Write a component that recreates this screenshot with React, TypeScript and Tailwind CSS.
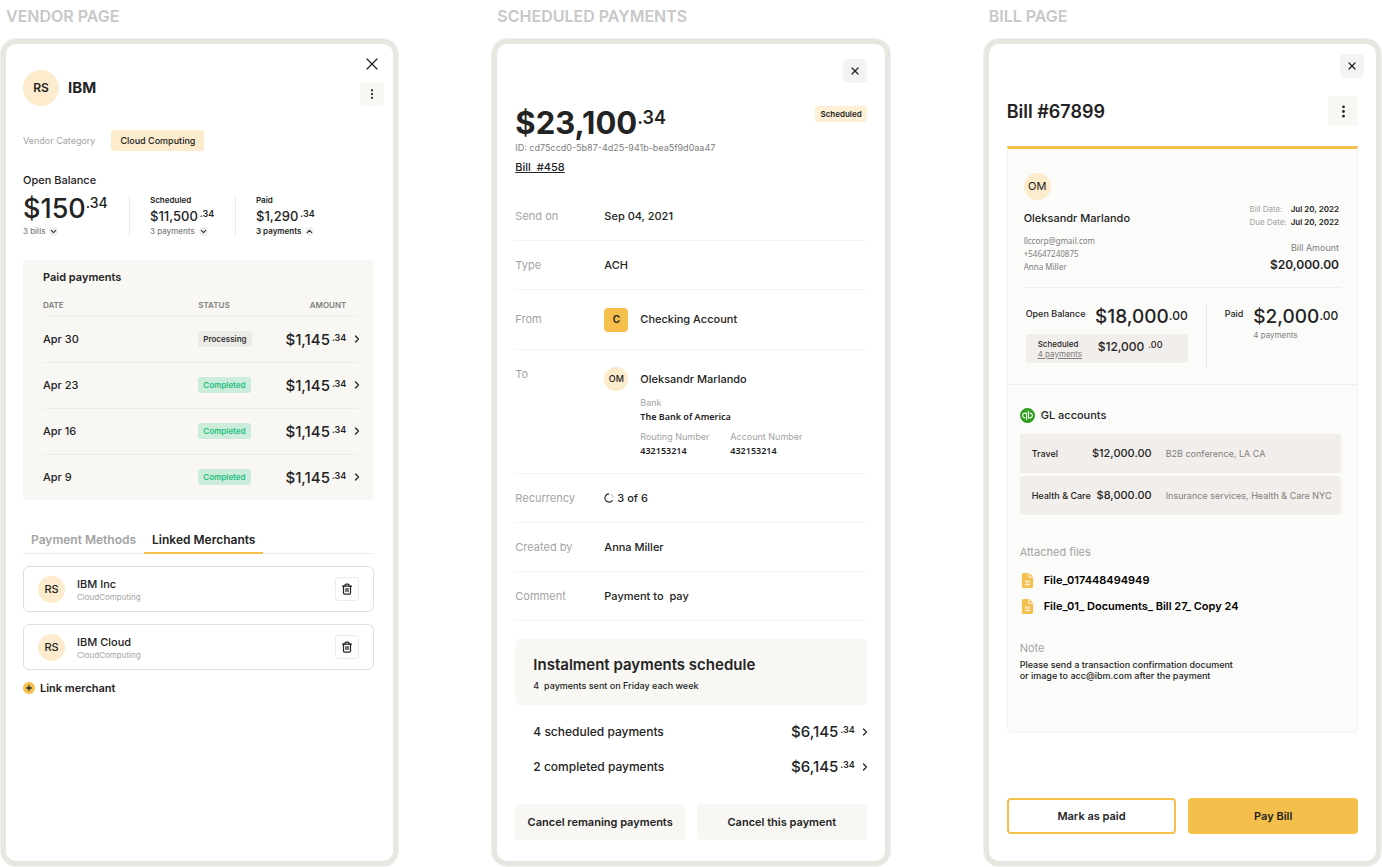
import { useState } from "react"
import type { ReactNode } from "react"
import { ChevronDown, ChevronRight, ChevronUp, Plus, Trash2, X } from "lucide-react"
import { BsThreeDotsVertical } from "react-icons/bs"
import { FaFileLines } from "react-icons/fa6"
import { SiQuickbooks } from "react-icons/si"

const payments = [
    { date: "Apr 30", status: "Processing" },
    { date: "Apr 23", status: "Completed" },
    { date: "Apr 16", status: "Completed" },
    { date: "Apr 9", status: "Completed" },
]

const merchants = ["IBM Inc", "IBM Cloud"]

const accounts = [
    { name: "Travel", amount: "$12,000.00", note: "B2B conference, LA CA" },
    { name: "Health & Care", amount: "$8,000.00", note: "Insurance services, Health & Care NYC" },
]

const Phone = ({ title, children }: { title: string; children: ReactNode }) => (
    <section className="flex min-w-0 flex-col">
        <h2 className="h-[38px] pl-[6px] pt-1 text-base font-semibold text-[#c8c8c8]">{title}</h2>
        <div className="flex flex-1 flex-col rounded-[16px] border border-[#f0f0ec] bg-[#e7e6e0] p-[5px]">
            <div className="flex flex-1 flex-col rounded-[10px] bg-white px-[18px]">{children}</div>
        </div>
    </section>
)

const Row = ({ label, children }: { label: string; children: ReactNode }) => (
    <div className="flex h-[49px] items-center border-b border-[#f4f4f2] text-[11px]">
        <dt className="w-[89px] text-[#a3a3a3]">{label}</dt>
        <dd className="flex items-center gap-[3px] font-medium">{children}</dd>
    </div>
)

const VendorPage = () => {
    const [tab, setTab] = useState("Linked Merchants")

    return (
        <Phone title="VENDOR PAGE">
            <header className="-ml-px -mr-[9px] flex items-end justify-between pt-2">
                <div className="flex items-center gap-[9px]">
                    <div className="flex size-9 items-center justify-center rounded-full bg-[#fcebcc] text-[12px] font-semibold">RS</div>
                    <h1 className="text-[15px] font-bold">IBM</h1>
                </div>
                <div className="flex flex-col gap-[6px]">
                    <button aria-label="Close" className="flex size-6 items-center justify-center">
                        <X size={20} strokeWidth={1.5} />
                    </button>
                    <button aria-label="More" className="flex size-6 items-center justify-center rounded bg-[#f8f7f4]">
                        <BsThreeDotsVertical size={12} />
                    </button>
                </div>
            </header>

            <div className="-ml-px mr-px">
                <div className="mt-6 flex items-center gap-4">
                    <span className="text-[9px] text-[#a3a3a3]">Vendor Category</span>
                    <span className="rounded-[3px] bg-[#fcebcc] px-[9px] text-[9px] font-medium leading-[21px]">Cloud Computing</span>
                </div>

                <div className="mt-[21px] text-[11px] font-medium leading-4">Open Balance</div>
                <div className="mt-[7px] flex h-[42px]">
                    <div className="w-[106px]">
                        <div className="flex items-start">
                            <span className="text-[27px] font-medium leading-[27px]">$150</span>
                            <span className="text-[14px] font-medium leading-4">.34</span>
                        </div>
                        <button className="mt-1 flex items-center gap-1 text-[8px] font-medium leading-[10px] text-[#808080]">
                            3 bills
                            <span className="rounded-full bg-[#efefec] text-[#333]"><ChevronDown size={9} strokeWidth={3} /></span>
                        </button>
                    </div>
                    <div className="w-[106px] border-l border-[#ececec] pl-5">
                        <div className="text-[8px] font-semibold leading-[11px]">Scheduled</div>
                        <div className="flex items-start gap-[2px] pt-[2px]">
                            <span className="text-[13px] font-medium leading-4">$11,500</span>
                            <span className="text-[9px] font-semibold leading-3">.34</span>
                        </div>
                        <button className="mt-[2px] flex items-center gap-1 text-[8px] font-medium leading-[10px] text-[#808080]">
                            3 payments
                            <span className="rounded-full bg-[#efefec] text-[#333]"><ChevronDown size={9} strokeWidth={3} /></span>
                        </button>
                    </div>
                    <div className="border-l border-[#ececec] pl-5">
                        <div className="text-[8px] font-semibold leading-[11px]">Paid</div>
                        <div className="flex items-start gap-[2px] pt-[2px]">
                            <span className="text-[13px] font-medium leading-4">$1,290</span>
                            <span className="text-[9px] font-semibold leading-3">.34</span>
                        </div>
                        <button className="mt-[2px] flex items-center gap-1 text-[8px] font-semibold leading-[10px]">
                            3 payments
                            <span className="rounded-full bg-[#efefec] text-[#333]"><ChevronUp size={9} strokeWidth={3} /></span>
                        </button>
                    </div>
                </div>

                <div className="mt-[23px] rounded bg-[#f8f7f3] pl-5 pr-[15px] pt-[9px]">
                    <h3 className="text-[11px] font-semibold leading-4">Paid payments</h3>
                    <table className="mt-[10px] w-full text-left">
                        <thead>
                            <tr className="h-[21px] border-b border-[#eeedea] text-[8px] text-[#808080]">
                                <th className="font-semibold">DATE</th>
                                <th className="w-[80px] font-semibold">STATUS</th>
                                <th className="w-[68px] text-right font-semibold">AMOUNT</th>
                                <th className="w-[13px]"></th>
                            </tr>
                        </thead>
                        <tbody>
                            {payments.map((p) => (
                                <tr key={p.date} className="h-[46px] border-b border-[#eeedea] last:border-0">
                                    <td className="text-[11px] font-medium">{p.date}</td>
                                    <td>
                                        <div className={`w-fit rounded-[3px] px-[5px] text-[8px] font-semibold leading-4 ${p.status === "Completed" ? "bg-[#ccecdc] text-[#1fbf7c]" : "bg-[#ecebe8] text-[#333]"}`}>
                                            {p.status}
                                        </div>
                                    </td>
                                    <td>
                                        <div className="flex items-start justify-end gap-[2px] pt-px">
                                            <span className="text-[15px] font-medium leading-5">$1,145</span>
                                            <span className="text-[9px] font-semibold leading-4">.34</span>
                                        </div>
                                    </td>
                                    <td><ChevronRight size={12} strokeWidth={2.5} className="-mr-1 ml-auto" /></td>
                                </tr>
                            ))}
                        </tbody>
                    </table>
                </div>

                <div role="tablist" className="mt-[27px] flex border-b border-[#ececec] text-[12px] font-semibold">
                    {["Payment Methods", "Linked Merchants"].map((name) => (
                        <button
                            key={name}
                            role="tab"
                            aria-selected={tab === name}
                            onClick={() => setTab(name)}
                            className={`-mb-px h-[27px] border-b-2 px-2 ${tab === name ? "border-[#f4bf4b]" : "border-transparent text-[#a3a3a3]"}`}
                        >
                            {name}
                        </button>
                    ))}
                </div>

                <ul className="mt-3 flex flex-col gap-3">
                    {merchants.map((name) => (
                        <li key={name} className="flex h-[46px] items-center rounded-md border border-[#dfdfe0] px-[14px]">
                            <div className="flex size-[27px] items-center justify-center rounded-full bg-[#fcebcc] text-[11px] font-medium">RS</div>
                            <div className="ml-3 pt-[2px]">
                                <div className="text-[11px] font-medium leading-[14px]">{name}</div>
                                <div className="text-[8px] leading-[13px] text-[#a3a3a3]">CloudComputing</div>
                            </div>
                            <button aria-label={`Remove ${name}`} className="ml-auto flex size-6 items-center justify-center rounded-[3px] border border-[#ececec]">
                                <Trash2 size={12} strokeWidth={2.5} />
                            </button>
                        </li>
                    ))}
                </ul>
                <button className="mt-[10px] flex items-center gap-[5px] text-[11px] font-semibold leading-4">
                    <span className="rounded-full bg-[#f4bf4b] p-[2px]"><Plus size={8} strokeWidth={4} /></span>
                    Link merchant
                </button>
            </div>
        </Phone>
    )
}

const ScheduledPayments = () => (
    <Phone title="SCHEDULED PAYMENTS">
        <button aria-label="Close" className="mt-[15px] flex size-6 items-center justify-center self-end rounded-[5px] bg-[#f3f3f3]">
            <X size={12} strokeWidth={2.5} />
        </button>
        <div className="mt-[23px] flex items-start justify-between">
            <h1 className="flex items-start">
                <span className="text-[31px] font-bold leading-[34px]">$23,100</span>
                <span className="text-[18px] font-semibold leading-6">.34</span>
            </h1>
            <span className="rounded-[3px] bg-[#fdf0d6] px-[5px] text-[8px] font-semibold leading-4">Scheduled</span>
        </div>
        <div className="mt-[2px] text-[9px] leading-3 text-[#808080]">ID: cd75ccd0-5b87-4d25-941b-bea5f9d0aa47</div>
        <a href="#bill" className="mt-[5px] self-start whitespace-pre text-[11px] font-medium leading-4 underline">Bill  #458</a>

        <dl className="mt-[17px]">
            <Row label="Send on">Sep 04, 2021</Row>
            <Row label="Type">ACH</Row>
            <div className="flex h-[60px] items-center border-b border-[#f4f4f2] text-[11px]">
                <dt className="w-[89px] text-[#a3a3a3]">From</dt>
                <dd className="flex items-center gap-3 font-medium">
                    <span className="flex size-6 items-center justify-center rounded bg-[#f4bf4b] text-[10px] font-semibold">C</span>
                    Checking Account
                </dd>
            </div>
            <div className="flex h-[124px] border-b border-[#f4f4f2] pt-[17px] text-[11px]">
                <dt className="w-[89px] leading-[15px] text-[#a3a3a3]">To</dt>
                <dd>
                    <div className="flex items-center gap-3 font-medium">
                        <span className="flex size-6 items-center justify-center rounded-full bg-[#fcebcc] text-[9px]">OM</span>
                        Oleksandr Marlando
                    </div>
                    <div className="grid grid-cols-[90px_90px] pl-9 pt-[5px] text-[9px] leading-[14px]">
                        <span className="text-[#a3a3a3]">Bank</span>
                        <span className="col-span-2 font-['Noto_Sans'] font-semibold">The Bank of America</span>
                        <span className="pt-[6px] text-[#a3a3a3]">Routing Number</span>
                        <span className="pt-[6px] text-[#a3a3a3]">Account Number</span>
                        <span className="font-['Noto_Sans'] font-semibold">432153214</span>
                        <span className="font-['Noto_Sans'] font-semibold">432153214</span>
                    </div>
                </dd>
            </div>
            <Row label="Recurrency">
                <svg width="10" height="10" viewBox="0 0 18 18" fill="none" stroke="currentColor" strokeWidth="2">
                    <path d="M9 1.5A7.5 7.5 0 1 0 15.500 13" />
                    <path d="M12 2A7.500 7.500 0 0 1 16.500 9" stroke="#c4c4c4" />
                </svg>
                3 of 6
            </Row>
            <Row label="Created by">Anna Miller</Row>
            <Row label="Comment"><span className="whitespace-pre">Payment to  pay</span></Row>
        </dl>

        <div className="mt-[18px] rounded-md bg-[#f8f7f4] px-[18px] pb-[13px] pt-4">
            <h3 className="text-[15px] font-semibold leading-5">Instalment payments schedule</h3>
            <p className="mt-1 whitespace-pre text-[9px] font-medium leading-[13px]">4  payments sent on Friday each week</p>
        </div>
        <div className="mt-[9px] pl-[18px]">
            {["4 scheduled payments", "2 completed payments"].map((label) => (
                <button key={label} className="flex h-[35px] w-full items-center text-[12px] font-medium">
                    {label}
                    <span className="ml-auto flex items-start gap-[2px]">
                        <span className="text-[15px] font-medium leading-5">$6,145</span>
                        <span className="text-[9px] font-semibold leading-4">.34</span>
                    </span>
                    <ChevronRight size={12} strokeWidth={2.5} className="-mr-1 ml-1" />
                </button>
            ))}
        </div>
        <div className="mb-5 mt-5 grid grid-cols-2 gap-3 text-[11px] font-semibold">
            <button className="h-9 rounded bg-[#f8f7f4]">Cancel remaning payments</button>
            <button className="h-9 rounded bg-[#f8f7f4]">Cancel this payment</button>
        </div>
    </Phone>
)

const BillPage = () => (
    <Phone title="BILL PAGE">
        <button aria-label="Close" className="-mr-[6px] mt-[10px] flex size-6 items-center justify-center self-end rounded-[5px] bg-[#f3f3f3]">
            <X size={12} strokeWidth={2.5} />
        </button>
        <div className="mt-[18px] flex items-center justify-between">
            <h1 className="text-[18px] font-semibold">Bill #67899</h1>
            <button aria-label="More" className="flex size-[30px] items-center justify-center rounded bg-[#f8f7f4]">
                <BsThreeDotsVertical size={15} />
            </button>
        </div>

        <div className="mt-5 rounded-b-md border border-t-[3px] border-[#f3f2ef] border-t-[#f4bf4b] bg-[#fbfbf9] pb-[51px]">
            <div className="mx-4 flex items-end justify-between border-b border-[#eeeeec] pb-[14px] pt-6">
                <div>
                    <div className="flex size-[27px] items-center justify-center rounded-full bg-[#fcebcc] text-[11px]">OM</div>
                    <div className="mt-[10px] text-[11px] font-medium leading-4">Oleksandr Marlando</div>
                    <div className="mt-2 font-['Noto_Sans'] text-[8px] leading-[13px] text-[#808080]">
                        <div>llccorp@gmail.com</div>
                        <div>+54647240875</div>
                        <div>Anna Miller</div>
                    </div>
                </div>
                <div className="flex flex-col items-end pr-[2px]">
                    <dl className="grid grid-cols-[auto_auto] gap-x-1 text-[8px] leading-[13px]">
                        <dt className="text-[#a3a3a3]">Bill Date:</dt>
                        <dd className="font-semibold">Jul 20, 2022</dd>
                        <dt className="text-[#a3a3a3]">Due Date:</dt>
                        <dd className="font-semibold">Jul 20, 2022</dd>
                    </dl>
                    <div className="mt-[11px] text-[9px] leading-4 text-[#808080]">Bill Amount</div>
                    <div className="mt-px text-[12px] font-semibold leading-4">$20,000.00</div>
                </div>
            </div>

            <div className="mx-[18px] flex pb-4 pt-4">
                <div className="w-[162px]">
                    <div className="flex items-start justify-between">
                        <span className="pt-1 text-[9px] font-medium leading-3">Open Balance</span>
                        <span className="flex items-start">
                            <span className="text-[19px] font-medium leading-[26px]">$18,000</span>
                            <span className="text-[12px] font-medium leading-6">.00</span>
                        </span>
                    </div>
                    <div className="mt-1 flex h-[29px] items-center rounded-[3px] bg-[#f2eeeb]">
                        <div className="w-[72px] pl-3 text-[8px] leading-[10px]">
                            <div className="font-medium">Scheduled</div>
                            <a href="#payments" className="text-[#808080] underline">4 payments</a>
                        </div>
                        <div className="flex items-start gap-1 pb-1">
                            <span className="text-[12px] font-medium leading-4">$12,000</span>
                            <span className="text-[9px] font-medium leading-3">.00</span>
                        </div>
                    </div>
                </div>
                <div className="ml-[18px] flex h-16 flex-1 items-start gap-[10px] border-l border-[#e8e8e6] pl-[18px]">
                    <span className="pt-1 text-[9px] font-medium leading-3">Paid</span>
                    <div>
                        <div className="flex items-start">
                            <span className="text-[19px] font-medium leading-[26px]">$2,000</span>
                            <span className="text-[12px] font-medium leading-6">.00</span>
                        </div>
                        <div className="text-[8px] leading-[10px] text-[#808080]">4 payments</div>
                    </div>
                </div>
            </div>

            <div className="border-t border-[#eeeeec] pl-3 pr-4 pt-[22px]">
                <h3 className="flex items-center gap-[6px] text-[11px] font-medium leading-4">
                    <SiQuickbooks size={15} color="#2ca01c" />
                    GL accounts
                </h3>
                <table className="mt-2 w-full table-fixed border-separate border-spacing-x-0 border-spacing-y-[3px] text-left">
                    <tbody>
                        {accounts.map((a) => (
                            <tr key={a.name} className="h-[39px] bg-[#f2eeeb]">
                                <td className="w-[72px] whitespace-nowrap rounded-l-[3px] pl-3 text-[9px] font-medium">{a.name}</td>
                                <td className="w-[60px] text-right text-[11px] font-medium">{a.amount}</td>
                                <td className="whitespace-nowrap rounded-r-[3px] pl-[14px] text-[9px] text-[#808080]">{a.note}</td>
                            </tr>
                        ))}
                    </tbody>
                </table>

                <h3 className="mt-[26px] text-[11px] leading-4 text-[#a3a3a3]">Attached files</h3>
                <ul className="mt-[7px] text-[11px] font-semibold text-black">
                    {["File_017448494949", "File_01_ Documents_ Bill 27_ Copy 24"].map((file) => (
                        <li key={file} className="flex h-[26px] items-center gap-[9px]">
                            <FaFileLines size={15} color="#f4bf4b" />
                            <a href="#file">{file}</a>
                        </li>
                    ))}
                </ul>

                <h3 className="mt-[21px] text-[11px] leading-4 text-[#a3a3a3]">Note</h3>
                <p className="mt-[3px] text-[9px] font-medium leading-[11px]">
                    Please send a transaction confirmation document
                    <br />
                    or image to acc@ibm.com after the payment
                </p>
            </div>
        </div>

        <div className="mb-[27px] mt-auto grid grid-cols-2 gap-3 text-[11px] font-semibold">
            <button className="h-9 rounded border-2 border-[#f4bf4b]">Mark as paid</button>
            <button className="h-9 rounded bg-[#f4bf4b]">Pay Bill</button>
        </div>
    </Phone>
)

const App = () => (
    <main className="grid min-h-screen grid-cols-3 gap-x-[92px] bg-white font-[Inter,sans-serif] text-[#232323]">
        <VendorPage />
        <ScheduledPayments />
        <BillPage />
    </main>
)

export default App
